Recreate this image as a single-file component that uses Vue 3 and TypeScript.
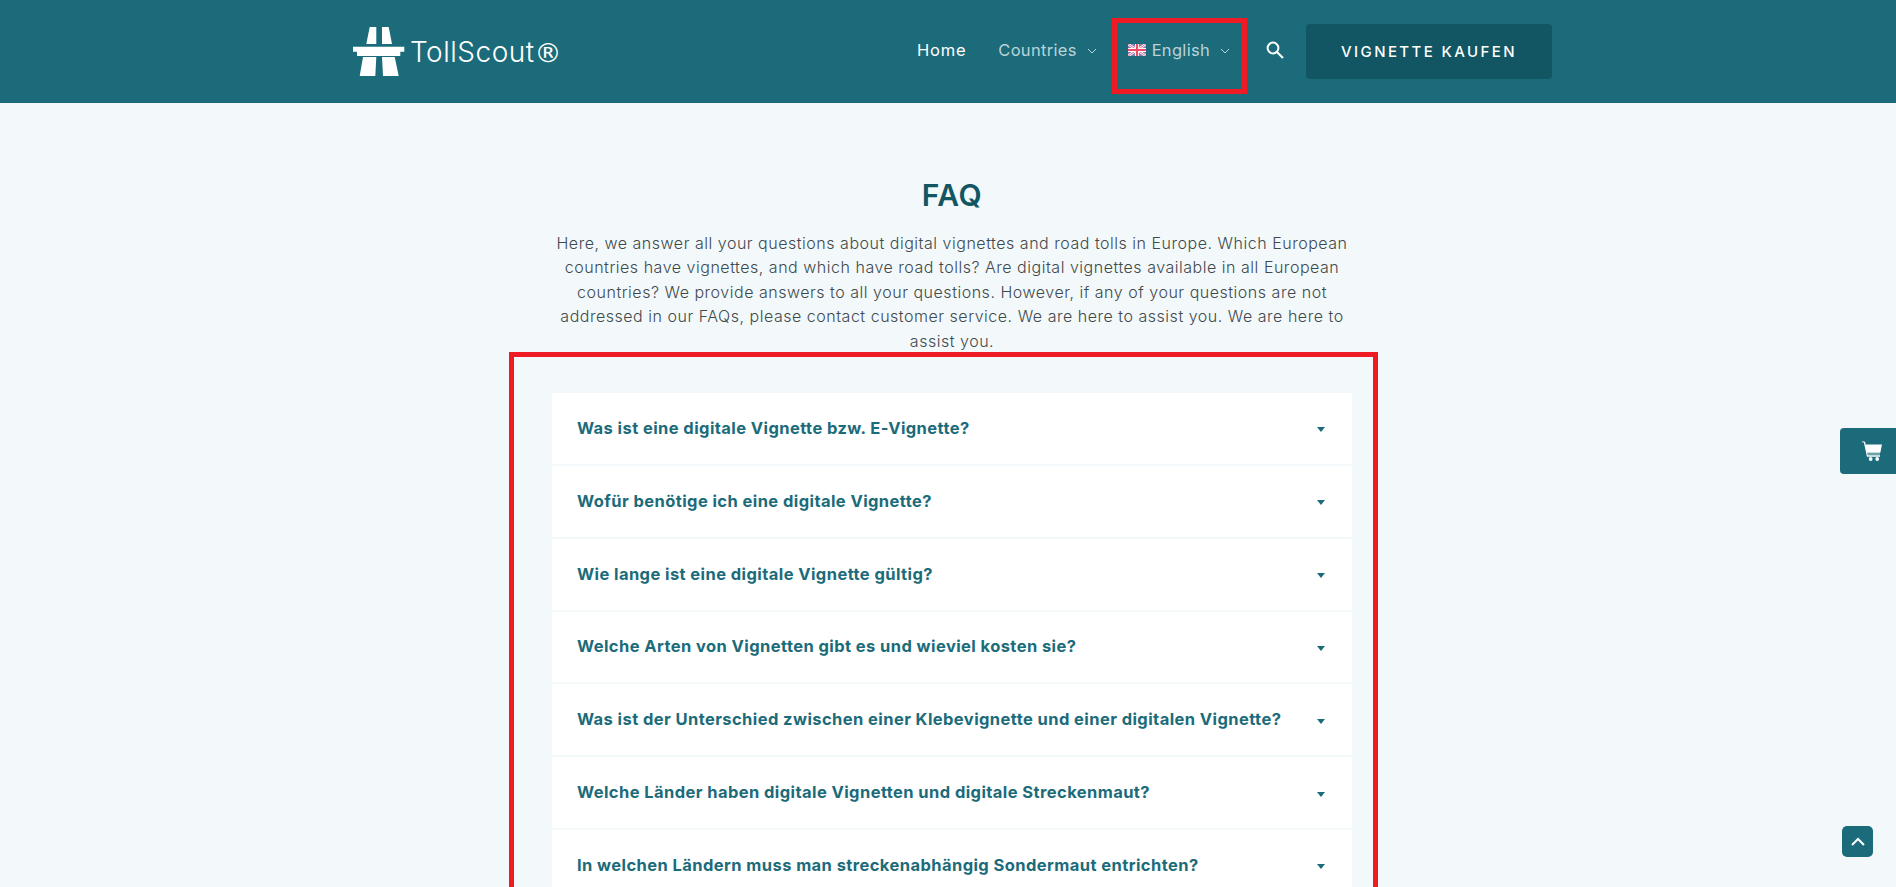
<script setup lang="ts">
const questions: string[] = [
  'Was ist eine digitale Vignette bzw. E-Vignette?',
  'Wofür benötige ich eine digitale Vignette?',
  'Wie lange ist eine digitale Vignette gültig?',
  'Welche Arten von Vignetten gibt es und wieviel kosten sie?',
  'Was ist der Unterschied zwischen einer Klebevignette und einer digitalen Vignette?',
  'Welche Länder haben digitale Vignetten und digitale Streckenmaut?',
  'In welchen Ländern muss man streckenabhängig Sondermaut entrichten?',
]
</script>

<template>
  <div class="page">
    <header class="header">
      <div class="brand">
        <svg class="logo" width="52" height="50" viewBox="0 0 52 50">
          <path d="M16.7 0h6.6v17h-10z M29 0h6.7L39 17H29z" fill="#fff" />
          <path d="M0 19.7h51.3v5h-4V29H4v-4.300H0z" fill="#fff" />
          <path d="M10 30h13.300l-1 19H6.700z M29 30h12.700l4 19H30z" fill="#fff" />
        </svg>
        <span class="brand-name">TollScout<span class="reg">®</span></span>
      </div>
      <nav class="nav">
        <a class="nav-link home">Home</a>
        <a class="nav-link countries">Countries
          <svg class="chev" width="10" height="6" viewBox="0 0 10 6"><path d="M1 1l4 4 4-4" fill="none" stroke="currentColor" /></svg>
        </a>
        <a class="nav-link lang">
          <svg width="18" height="12" viewBox="0 0 18 12">
            <rect width="18" height="12" fill="#7d7fb8" />
            <path d="M0 0l18 12M18 0L0 12" stroke="#fff" stroke-width="2.4" />
            <path d="M0 0l18 12M18 0L0 12" stroke="#ee5a72" stroke-width="0.9" />
            <path d="M9 0v12M0 6h18" stroke="#fff" stroke-width="4" />
            <path d="M9 0v12M0 6h18" stroke="#ee4b66" stroke-width="2.2" />
          </svg>
          English
          <svg class="chev" width="10" height="6" viewBox="0 0 10 6"><path d="M1 1l4 4 4-4" fill="none" stroke="currentColor" /></svg>
        </a>
        <svg class="search" width="20" height="20" viewBox="0 0 20 20">
          <circle cx="8" cy="8" r="5.4" fill="none" stroke="#fff" stroke-width="2" />
          <path d="M12 12l6 6" stroke="#fff" stroke-width="2.2" />
        </svg>
        <a class="buy">VIGNETTE KAUFEN</a>
      </nav>
    </header>

    <main class="main">
      <h1 class="title">FAQ</h1>
      <p class="intro">Here, we answer all your questions about digital vignettes and road tolls in Europe. Which European countries have vignettes, and which have road tolls? Are digital vignettes available in all European countries? We provide answers to all your questions. However, if any of your questions are not addressed in our FAQs, please contact customer service. We are here to assist you. We are here to assist you.</p>
      <div class="list">
        <div v-for="q in questions" :key="q" class="item">
          <span class="question">{{ q }}</span>
          <span class="caret"></span>
        </div>
      </div>
    </main>

    <div class="mark mark-lang"></div>
    <div class="mark mark-list"></div>

    <div class="cart">
      <svg width="20" height="20" viewBox="0 0 20 20">
        <path d="M0 .8h2.400" stroke="#a9c8cf" stroke-width="1.400" fill="none" />
        <path d="M2.400 .8L5.500 15h12.500" stroke="#fff" stroke-width="1.300" fill="none" />
        <path d="M3 3.400h17l-1.700 8.400H5z" fill="#fff" />
        <rect x="5" y="12.300" width="13" height="1.400" fill="#8fb9c2" />
        <circle cx="8.700" cy="18" r="1.900" fill="#fff" />
        <circle cx="15.200" cy="18" r="1.900" fill="#fff" />
      </svg>
    </div>
    <div class="top">
      <svg width="16" height="10" viewBox="0 0 16 10"><path d="M2 8l6-6 6 6" fill="none" stroke="#fff" stroke-width="2" /></svg>
    </div>
  </div>
</template>

<style>
html, body { margin: 0; overflow: hidden; height: 887px; background: #f3f8fb; }
</style>

<style scoped>
.page {
  height: 887px;
  overflow: hidden;
  background: #f3f8fb;
  font-family: Inter, "Open Sans", sans-serif;
  position: relative;
}
.header {
  height: 103px;
  box-sizing: border-box;
  background: #1b6b7a;
  padding: 0 344px 0 353px;
  display: flex;
  justify-content: space-between;
  align-items: center;
}
.brand { display: flex; align-items: center; gap: 5px; margin-top: 1px; }
.brand-name { color: #fff; font-size: 28px; font-weight: 300; letter-spacing: 0.5px; margin-top: 0; }
.reg { font-family: "DejaVu Sans", sans-serif; font-weight: 400; font-size: 27px; letter-spacing: 0; }
.nav { display: flex; align-items: center; color: #fff; margin-top: -3px; }
.nav-link { color: #b9d3d9; font-size: 16.5px; letter-spacing: 0.3px; display: flex; align-items: center; gap: 6px; margin-right: 32px; }
.home { color: #fff; letter-spacing: 0.8px; }
.countries { margin-right: 31px; }
.chev { margin-left: 4px; margin-top: 2px; }
.lang { margin-right: 35px; }
.search { margin-right: 21px; margin-top: -1px; }
.buy {
  width: 246px;
  height: 55px;
  background: #125663;
  border-radius: 4px;
  display: flex;
  align-items: center;
  justify-content: center;
  font-size: 15px;
  font-weight: 500;
  letter-spacing: 2.4px;
  margin-top: 3px;
  color: #fff;
}
.main { width: 800px; margin-left: 552px; padding-top: 72px; }
.title { margin: 0; text-align: center; color: #125663; font-size: 30px; font-weight: 600; letter-spacing: 0.6px; line-height: 40px; }
.intro { margin: 16px 0 0; text-align: center; color: #3f4a4d; font-size: 16px; font-weight: 300; letter-spacing: 0.52px; line-height: 24.4px; }
.list { margin-top: 40px; display: flex; flex-direction: column; gap: 2px; }
.item {
  height: 70.83px;
  background: #fff;
  display: flex;
  align-items: center;
  justify-content: space-between;
  padding: 0 27px 0 25px;
  flex: none;
}
.question { color: #1b6b7a; font-size: 16.5px; font-weight: 700; letter-spacing: 0.42px; margin-top: -1px; }
.caret { width: 0; height: 0; border: 4px solid transparent; border-top: 5px solid #1b6b7a; border-bottom: 0; margin-top: 3px; }
.mark { position: absolute; border: 5px solid #ef1b24; box-sizing: border-box; }
.mark-lang { left: 1112px; top: 18px; width: 135px; height: 76px; }
.mark-list { left: 509px; top: 352px; width: 869px; height: 560px; }
.cart {
  position: absolute;
  right: 0;
  top: 428px;
  width: 56px;
  height: 46px;
  box-sizing: border-box;
  padding-left: 22px;
  background: #1b6b7a;
  border-radius: 4px 0 0 4px;
  display: flex;
  align-items: center;
}
.top {
  position: absolute;
  left: 1842px;
  top: 826px;
  width: 31px;
  height: 31px;
  background: #1b6b7a;
  border-radius: 5px;
  display: flex;
  align-items: center;
  justify-content: center;
}
</style>
